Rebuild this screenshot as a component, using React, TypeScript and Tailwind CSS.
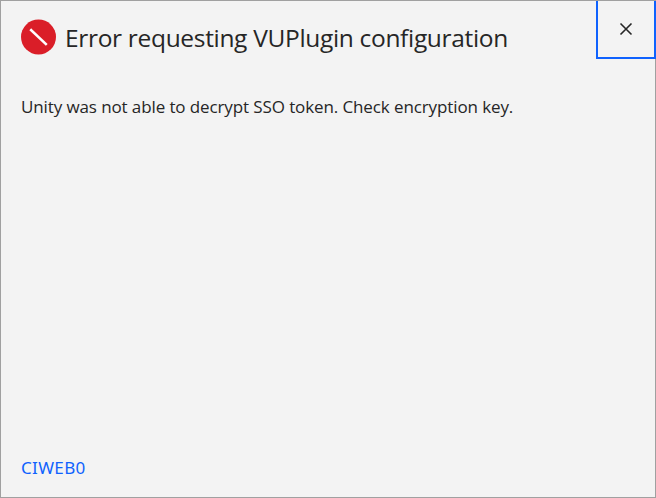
export default function App() {
  return (
    <main className="flex h-[498px] w-[656px] flex-col border border-[#a0a0a0] bg-[#f3f3f3] font-['Open_Sans',sans-serif] text-[#262626]">
      <header className="flex h-[58px] items-start justify-between">
        <div className="flex items-start gap-[9px] pt-[18px] pl-5">
          <svg width="35" height="36" viewBox="0 0 35 36" aria-hidden="true">
            <circle cx="17.5" cy="18" r="17.5" fill="#da1e28" />
            <path d="M10.2 11.2 24.8 25" stroke="#fff" strokeWidth="2.6" strokeLinecap="square" />
          </svg>
          <h1 className="text-[24.5px] leading-[37px] tracking-[-0.32px] whitespace-nowrap">Error requesting VUPlugin configuration</h1>
        </div>
        <button className="-mr-px flex h-[58px] w-[60px] items-center justify-center border-2 border-t-0 border-[#0f62fe]" aria-label="Close">
          <svg width="14" height="14" viewBox="0 0 14 14"><path d="M1.5 1.5 12.5 12.5M12.5 1.5 1.5 12.5" stroke="#262626" strokeWidth="1.6" /></svg>
        </button>
      </header>
      <p className="px-5 pt-[36px] text-[17px] leading-6 tracking-[-0.11px] whitespace-nowrap">Unity was not able to decrypt SSO token. Check encryption key.</p>
      <a className="mt-auto px-5 pb-[17px] font-['Noto_Sans',sans-serif] text-[17px] leading-6 tracking-[0.35px] text-[#0f62fe]">CIWEB0</a>
    </main>
  );
}
